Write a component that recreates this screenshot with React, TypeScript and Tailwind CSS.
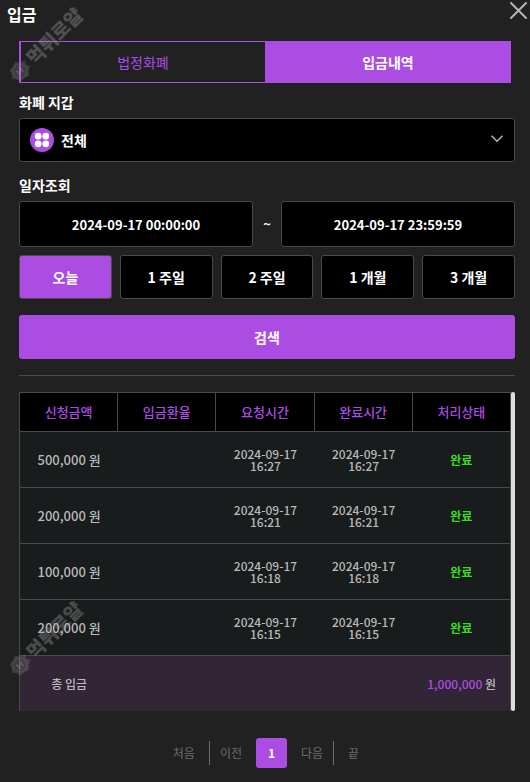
import { useState } from "react";
import clsx from "clsx";

const periods = ["오늘", "1 주일", "2 주일", "1 개월", "3 개월"];

const columns = ["신청금액", "입금환율", "요청시간", "완료시간", "처리상태"];

const deposits = [
  { id: 1, amount: "500,000", date: "2024-09-17", time: "16:27" },
  { id: 2, amount: "200,000", date: "2024-09-17", time: "16:21" },
  { id: 3, amount: "100,000", date: "2024-09-17", time: "16:18" },
  { id: 4, amount: "200,000", date: "2024-09-17", time: "16:15" },
];

function Watermark({ className }: { className: string }) {
  return (
    <svg
      viewBox="0 0 90 90"
      aria-hidden="true"
      className={clsx("pointer-events-none absolute left-0 size-[90px]", className)}
    >
      <g transform="translate(20 71) rotate(-45)" fill="#aaa" opacity="0.34">
        <path
          d="M-11 0 L-8 -4 L-7 -8 L-2 -8 L3 -10 L6 -6 L11 -4 L9 0 L11 4 L6 6 L3 10 L-2 8 L-7 8 L-8 4 Z"
          opacity="0.6"
        />
        <circle r="7" fill="none" stroke="#aaa" strokeWidth="1.5" opacity="0.6" />
        <path d="M-2.5 -3 V3 M-2.5 0 H2 M2 -3 V3" stroke="#ccc" strokeWidth="1.5" fill="none" />
        <text
          x="14"
          y="7"
          fontSize="19"
          fontWeight="900"
          className="font-['Noto_Sans_CJK_KR',sans-serif]"
        >
          먹튀로얄
        </text>
      </g>
    </svg>
  );
}

function WalletIcon() {
  return (
    <svg
      viewBox="0 0 24 24"
      aria-hidden="true"
      className="pointer-events-none absolute top-[10px] left-[11px] size-6"
    >
      <circle cx="12" cy="12" r="12" fill="#ab4de3" />
      <g fill="#fff">
        <circle cx="8.2" cy="8.2" r="3.4" />
        <circle cx="15.8" cy="8.2" r="3.4" />
        <circle cx="8.2" cy="15.8" r="3.4" />
        <circle cx="15.8" cy="15.8" r="3.4" />
      </g>
    </svg>
  );
}

export default function App() {
  const [tab, setTab] = useState("history");
  const [period, setPeriod] = useState("오늘");
  const [from, setFrom] = useState("2024-09-17 00:00:00");
  const [to, setTo] = useState("2024-09-17 23:59:59");

  return (
    <div className="relative min-h-screen bg-[#212121] pb-3 font-['Noto_Sans_CJK_KR',sans-serif] text-white">
      <header className="flex h-[41px] items-start justify-between pl-[7px]">
        <h1 className="pt-1 text-base leading-5 font-bold">입금</h1>
        <button type="button" aria-label="닫기" className="pt-0.5 pr-[3px]">
          <svg viewBox="0 0 17 17" className="size-[17px]" stroke="#b4b4b4" strokeWidth="2" strokeLinecap="round">
            <path d="M1 1 L16 16 M16 1 L1 16" />
          </svg>
        </button>
      </header>

      <main className="pr-[15px] pl-[19px]">
        <div className="mr-1 grid h-[42px] grid-cols-2 text-sm">
          {[
            { id: "fiat", label: "법정화폐" },
            { id: "history", label: "입금내역" },
          ].map((t) => (
            <button
              key={t.id}
              type="button"
              onClick={() => setTab(t.id)}
              className={clsx(
                "border border-[#ab4de3]",
                tab === t.id ? "bg-[#ab4de3] font-bold" : "border-r-0 border-l-2 text-[#ab4de3]"
              )}
            >
              {t.label}
            </button>
          ))}
        </div>

        <label htmlFor="wallet" className="mt-[9px] block text-sm leading-5 font-bold">
          화폐 지갑
        </label>
        <div className="relative mt-[6px]">
          <select
            id="wallet"
            className="block h-11 w-full appearance-none rounded-[3px] border border-[#4a4a4a] bg-black pl-[41px] text-sm font-bold"
          >
            <option>전체</option>
          </select>
          <WalletIcon />
          <svg
            viewBox="0 0 12 8"
            aria-hidden="true"
            className="pointer-events-none absolute top-[17px] right-3 h-2 w-3"
            fill="none"
            stroke="#b4b4b4"
            strokeWidth="1.5"
          >
            <path d="M0.5 0.8 L6 6.3 L11.5 0.8" />
          </svg>
        </div>

        <p className="mt-[13px] text-sm leading-5 font-bold">일자조회</p>
        <div className="mt-[6px] flex items-center text-[13px] font-bold">
          <input
            aria-label="시작일"
            value={from}
            onChange={(e) => setFrom(e.target.value)}
            className="h-[46px] w-full min-w-0 flex-1 rounded-[3px] border border-[#4a4a4a] bg-black text-center"
          />
          <span className="w-7 text-center">~</span>
          <input
            aria-label="종료일"
            value={to}
            onChange={(e) => setTo(e.target.value)}
            className="h-[46px] w-full min-w-0 flex-1 rounded-[3px] border border-[#4a4a4a] bg-black text-center"
          />
        </div>

        <div className="mt-2 grid grid-cols-5 gap-2">
          {periods.map((p) => (
            <button
              key={p}
              type="button"
              onClick={() => setPeriod(p)}
              className={clsx(
                "h-11 rounded-[3px] border border-[#4a4a4a] text-sm font-bold",
                period === p ? "bg-[#ab4de3]" : "bg-black"
              )}
            >
              {p}
            </button>
          ))}
        </div>

        <button type="button" className="mt-4 h-11 w-full rounded-[3px] bg-[#ab4de3] text-sm font-bold">
          검색
        </button>

        <hr className="mt-4 border-[#4a4a4a]" />

        <div className="mt-4 flex">
          <table className="flex-1 table-fixed border-separate border-spacing-0 border-t border-l border-[#4a4a4a] text-center text-[#b9b9b9]">
            <thead>
              <tr className="h-[39px] bg-black text-[13px] text-[#ab4de3]">
                {columns.map((c) => (
                  <th key={c} className="w-1/5 border-r border-b border-[#4a4a4a] p-0 font-medium">
                    {c}
                  </th>
                ))}
              </tr>
            </thead>
            <tbody>
              {deposits.map((d) => (
                <tr key={d.id} className="h-14 bg-[#191c1c] text-xs leading-3 font-medium">
                  <td className="border-b border-[#4a4a4a] p-0 text-[13px]">{d.amount} 원</td>
                  <td className="border-b border-[#4a4a4a] p-0" />
                  <td className="border-b border-[#4a4a4a] p-0">
                    {d.date}
                    <br />
                    {d.time}
                  </td>
                  <td className="border-b border-[#4a4a4a] p-0">
                    {d.date}
                    <br />
                    {d.time}
                  </td>
                  <td className="border-r border-b border-[#4a4a4a] p-0 font-bold text-[#3bdb25]">완료</td>
                </tr>
              ))}
            </tbody>
            <tfoot>
              <tr className="h-[55px] bg-[#322535] text-xs font-medium">
                <td className="p-0">총 입금</td>
                <td colSpan={4} className="border-r border-[#4a4a4a] py-0 pr-[14px] pl-0 text-right">
                  <span className="text-[#ab4de3]">1,000,000</span> 원
                </td>
              </tr>
            </tfoot>
          </table>
          <div className="w-1 rounded-sm bg-[#dedede]" />
        </div>

        <nav className="mt-[27px] flex items-center justify-center text-xs text-[#6c6c6c]">
          <button type="button" className="h-6 border-r border-[#6c6c6c] px-[14px]">
            처음
          </button>
          <button type="button" className="h-6 pr-[14px] pl-[10px]">
            이전
          </button>
          <button type="button" aria-current="page" className="h-[30px] w-[31px] rounded-[3px] bg-[#ab4de3] font-bold text-white">
            1
          </button>
          <button type="button" className="h-6 border-r border-[#6c6c6c] pr-[10px] pl-[14px]">
            다음
          </button>
          <button type="button" className="h-6 pr-4 pl-[14px]">
            끝
          </button>
        </nav>
      </main>

      <Watermark className="top-0" />
      <Watermark className="top-[594px]" />
    </div>
  );
}
